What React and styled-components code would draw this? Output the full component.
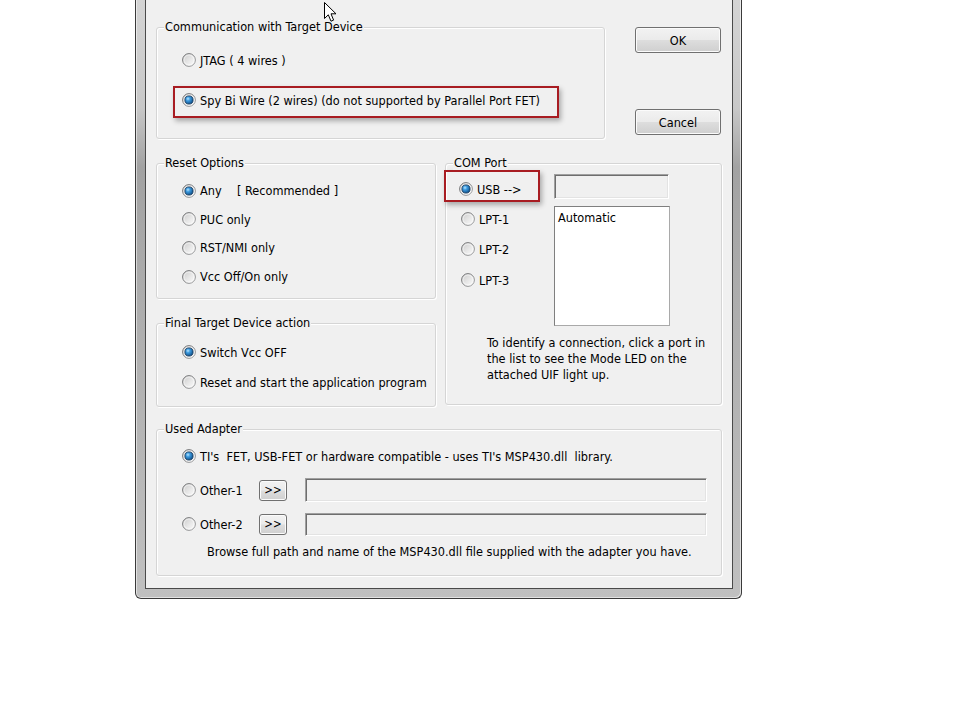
import React, { useId } from "react";
import styled, { createGlobalStyle } from "styled-components";

const GlobalStyle = createGlobalStyle`
  html, body {
    margin: 0;
    padding: 0;
    background: #ffffff;
  }
  body {
    font-family: "DejaVu Sans Condensed", "DejaVu Sans", sans-serif;
    font-size: 12.6px;
    color: #000000;
  }
`;

const Page = styled.div`
  position: relative;
  width: 960px;
  height: 720px;
  padding-left: 135px;
  box-sizing: border-box;
  overflow: hidden;
`;

const Window = styled.div`
  width: 607px;
  box-sizing: border-box;
  border: 1px solid #3a3a3a;
  border-top: none;
  border-radius: 0 0 6px 6px;
  padding: 0 8px 9px 9px;
  background: linear-gradient(180deg, #d4d4d4 0%, #c8c8c8 18%, #a2a2a2 28%, #adadad 50%, #b8b8b8 80%, #c0c0c0 100%);
  box-shadow: inset 1px 0 0 rgba(255, 255, 255, 0.55), inset -1px -1px 0 rgba(255, 255, 255, 0.55);
`;

const Client = styled.div`
  background: #f0f0f0;
  border: 1px solid #4a4a4a;
  border-top: none;
  padding: 27px 10px 12px;
  display: flex;
  flex-direction: column;
`;

const TopRow = styled.div`
  display: flex;
  align-items: flex-start;
  column-gap: 30px;
  margin-bottom: 24px;
`;

const MiddleRow = styled.div`
  display: flex;
  align-items: flex-start;
  column-gap: 9px;
  margin-bottom: 22px;
`;

const LeftColumn = styled.div`
  display: flex;
  flex-direction: column;
  row-gap: 24px;
`;

const Group = styled.div`
  position: relative;
  box-sizing: border-box;
  width: ${(p) => p.$w}px;
  height: ${(p) => p.$h}px;
  border: 1px solid #d5d5d5;
  border-radius: 3px;
  box-shadow: inset 1px 1px 0 #ffffff, 1px 1px 0 #ffffff;
  padding: ${(p) => p.$pad || "0"};
  display: flex;
  flex-direction: column;
  row-gap: ${(p) => p.$gap || 0}px;
`;

const Legend = styled.span`
  position: absolute;
  top: -9px;
  left: 7px;
  padding: 0 1px;
  line-height: 15px;
  background: #f0f0f0;
  white-space: nowrap;
`;

const Option = styled.div`
  display: flex;
  align-items: center;
  column-gap: 4px;
  height: 20px;
  white-space: nowrap;
  margin-left: ${(p) => p.$ml || 0}px;
  margin-top: ${(p) => p.$mt || 0}px;
`;

const Highlight = styled.div`
  box-sizing: border-box;
  width: ${(p) => p.$w}px;
  border: 2px solid #a81c22;
  padding: ${(p) => p.$pad};
  margin-left: ${(p) => p.$ml || 0}px;
  margin-top: ${(p) => p.$mt || 0}px;
  box-shadow: 2px 3px 5px rgba(0, 0, 0, 0.3);
`;

const ButtonColumn = styled.div`
  display: flex;
  flex-direction: column;
  row-gap: 56px;
`;

const PushButton = styled.div`
  box-sizing: border-box;
  width: ${(p) => p.$w}px;
  height: ${(p) => p.$h}px;
  display: flex;
  align-items: center;
  justify-content: center;
  border: 1px solid #707070;
  border-radius: 3px;
  background: linear-gradient(180deg, #f2f2f2 0%, #ebebeb 48%, #dddddd 52%, #cfcfcf 100%);
  box-shadow: inset 0 0 0 1px #fbfbfb;
  font-size: ${(p) => (p.$small ? 11.5 : 12.6)}px;
`;

const Tag = styled.span`
  display: inline-block;
  width: ${(p) => p.$w}px;
`;

const PortBody = styled.div`
  display: flex;
  align-items: flex-start;
`;

const PortColumn = styled.div`
  width: 94px;
  display: flex;
  flex-direction: column;
`;

const PortSide = styled.div`
  margin-left: 14px;
  margin-top: 10px;
  display: flex;
  flex-direction: column;
  row-gap: 7px;
`;

const EditBox = styled.div`
  box-sizing: border-box;
  width: ${(p) => p.$w}px;
  height: ${(p) => p.$h}px;
  margin-left: ${(p) => p.$ml || 0}px;
  background: #f0f0f0;
  border: 1px solid;
  border-color: #a0a0a0 #ffffff #ffffff #a0a0a0;
  box-shadow: inset 1px 1px 0 #6e6e6e, inset -1px -1px 0 #e3e3e3;
`;

const ListBox = styled.div`
  box-sizing: border-box;
  width: 116px;
  height: 120px;
  background: #ffffff;
  border: 1px solid;
  border-color: #7f7f7f #a9a9a9 #a9a9a9 #7f7f7f;
  padding: 3px 3px;
  line-height: 15px;
`;

const HelpText = styled.div`
  margin-top: 9px;
  padding-left: 41px;
  line-height: 16px;
  white-space: nowrap;
`;

const AdapterRow = styled.div`
  display: flex;
  align-items: center;
  height: 24px;
  margin-top: ${(p) => p.$mt}px;
`;

const Note = styled.div`
  margin-top: 8px;
  padding-left: 25px;
  line-height: 16px;
  white-space: nowrap;
`;

const CursorArrow = styled.svg`
  position: absolute;
  left: 324px;
  top: 2px;
`;

const Radio = ({ checked }) => {
  const id = useId().replace(/:/g, "");
  return (
    <svg width="14" height="14" viewBox="0 0 14 14" style={{ flex: "none" }}>
      <defs>
        <linearGradient id={`ring${id}`} x1="0" y1="0" x2="1" y2="1">
          <stop offset="0" stopColor="#6a6b6d" />
          <stop offset="1" stopColor="#a4a5a6" />
        </linearGradient>
        <linearGradient id={`fill${id}`} x1="0" y1="0" x2="1" y2="1">
          <stop offset="0" stopColor="#c9c9c9" />
          <stop offset="0.6" stopColor="#ebebeb" />
          <stop offset="1" stopColor="#fbfbfb" />
        </linearGradient>
        <radialGradient id={`dot${id}`} cx="0.38" cy="0.35" r="0.7">
          <stop offset="0" stopColor="#b8e6ff" />
          <stop offset="0.35" stopColor="#3c9be0" />
          <stop offset="1" stopColor="#0c4a82" />
        </radialGradient>
      </defs>
      <circle cx="7" cy="7" r="6.4" fill={`url(#fill${id})`} stroke={`url(#ring${id})`} strokeWidth="1" />
      <circle cx="7" cy="7" r="5" fill="none" stroke="#ffffff" strokeOpacity="0.7" strokeWidth="0.8" />
      {checked && (
        <circle cx="7" cy="7" r="4.1" fill={`url(#dot${id})`} stroke="#17385a" strokeWidth="0.8" />
      )}
    </svg>
  );
};

const Choice = ({ checked, children, ml, mt }) => (
  <Option $ml={ml} $mt={mt}>
    <Radio checked={checked} />
    <span>{children}</span>
  </Option>
);

const App = () => {
  return (
    <Page>
      <GlobalStyle />
      <Window>
        <Client>
          <TopRow>
            <Group $w={449} $h={112} $pad="22px 0 0 16px">
              <Legend>Communication with Target Device</Legend>
              <Choice ml={9}>JTAG ( 4 wires )</Choice>
              <Highlight $w={386} $mt={16} $pad="2px 0 6px 7px">
                <Choice checked>Spy Bi Wire (2 wires) (do not supported by Parallel Port FET)</Choice>
              </Highlight>
            </Group>
            <ButtonColumn>
              <PushButton $w={86} $h={26}>OK</PushButton>
              <PushButton $w={86} $h={26}>Cancel</PushButton>
            </ButtonColumn>
          </TopRow>

          <MiddleRow>
            <LeftColumn>
              <Group $w={280} $h={136} $pad="16.5px 0 0 25px" $gap={8.7}>
                <Legend>Reset Options</Legend>
                <Choice checked>
                  <Tag $w={37}>Any</Tag>[ Recommended ]
                </Choice>
                <Choice>PUC only</Choice>
                <Choice>RST/NMI only</Choice>
                <Choice>Vcc Off/On only</Choice>
              </Group>
              <Group $w={280} $h={84} $pad="18px 0 0 25px" $gap={10}>
                <Legend>Final Target Device action</Legend>
                <Choice checked>Switch Vcc OFF</Choice>
                <Choice>Reset and start the application program</Choice>
              </Group>
            </LeftColumn>

            <Group $w={277} $h={242}>
              <Legend>COM Port</Legend>
              <PortBody>
                <PortColumn>
                  <Highlight $w={96} $ml={-2} $mt={6} $pad="7px 0 1px 13px">
                    <Choice checked>USB --&gt;</Choice>
                  </Highlight>
                  <Choice ml={15} mt={7}>LPT-1</Choice>
                  <Choice ml={15} mt={10}>LPT-2</Choice>
                  <Choice ml={15} mt={11}>LPT-3</Choice>
                </PortColumn>
                <PortSide>
                  <EditBox $w={115} $h={25} />
                  <ListBox>Automatic</ListBox>
                </PortSide>
              </PortBody>
              <HelpText>
                To identify a connection, click a port in
                <br />
                the list to see the Mode LED on the
                <br />
                attached UIF light up.
              </HelpText>
            </Group>
          </MiddleRow>

          <Group $w={566} $h={147} $pad="16px 0 0 25px">
            <Legend>Used Adapter</Legend>
            <Choice checked>TI's&nbsp; FET, USB-FET or hardware compatible - uses TI's MSP430.dll&nbsp; library.</Choice>
            <AdapterRow $mt={12}>
              <Tag $w={77}>
                <Choice>Other-1</Choice>
              </Tag>
              <PushButton $w={28} $h={21} $small>&gt;&gt;</PushButton>
              <EditBox $w={402} $h={24} $ml={18} />
            </AdapterRow>
            <AdapterRow $mt={10}>
              <Tag $w={77}>
                <Choice>Other-2</Choice>
              </Tag>
              <PushButton $w={28} $h={21} $small>&gt;&gt;</PushButton>
              <EditBox $w={402} $h={23} $ml={18} />
            </AdapterRow>
            <Note>Browse full path and name of the MSP430.dll file supplied with the adapter you have.</Note>
          </Group>
        </Client>
      </Window>

      <CursorArrow width="14" height="22" viewBox="0 0 14 22">
        <path
          d="M0.5 0.5 L0.5 16.5 L4.3 12.8 L7 19.2 L9.6 18.1 L7 11.8 L12 11.8 Z"
          fill="#ffffff"
          stroke="#000000"
          strokeWidth="1"
          strokeLinejoin="miter"
        />
      </CursorArrow>
    </Page>
  );
};

export default App;
